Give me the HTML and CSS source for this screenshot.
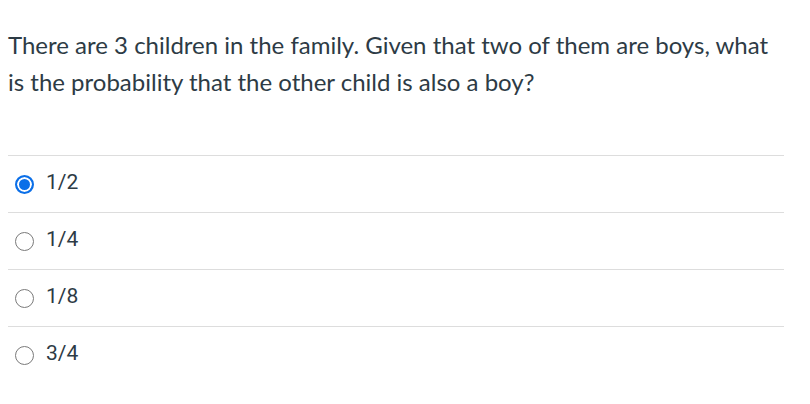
FILE: index.html
```html
<!DOCTYPE html>
<html>
<head>
<meta charset="utf-8">
<link rel="stylesheet" href="styles.css">
</head>
<body>
<div class="quiz">
  <div class="question">There are 3 children in the family. Given that two of them are boys, what is the probability that the other child is also a boy?</div>
  <div class="answers">
    <label class="answer"><span class="radio checked"></span><span class="text">1/2</span></label>
    <label class="answer"><span class="radio"></span><span class="text">1/4</span></label>
    <label class="answer"><span class="radio"></span><span class="text">1/8</span></label>
    <label class="answer last"><span class="radio"></span><span class="text">3/4</span></label>
  </div>
</div>
</body>
</html>
```
FILE: styles.css
```css
html, body { background: #fff; }
body { margin: 0; padding: 26px 26px 0 8px; }
.quiz { width: 776px; }
.question {
  font-family: Lato, "Noto Sans", sans-serif;
  font-size: 24px;
  line-height: 37px;
  color: #2d3b45;
}
.answers { margin-top: 55px; }
.answer {
  display: flex;
  align-items: center;
  gap: 12px;
  height: 56px;
  border-top: 1px solid #dddddd;
  padding-left: 7px;
}
.radio {
  width: 19px;
  height: 19px;
  box-sizing: border-box;
  border: 1px solid #7a7a7a;
  border-radius: 50%;
  flex: none;
}
.radio.checked {
  border: 2px solid #0b6fe8;
  background: #0b6fe8;
  box-shadow: inset 0 0 0 2px #fff;
}
.text {
  font-family: Roboto, "Liberation Sans", Arial, sans-serif;
  font-size: 21px;
  color: #2d3b45;
  position: relative;
  top: -2px;
}
```
